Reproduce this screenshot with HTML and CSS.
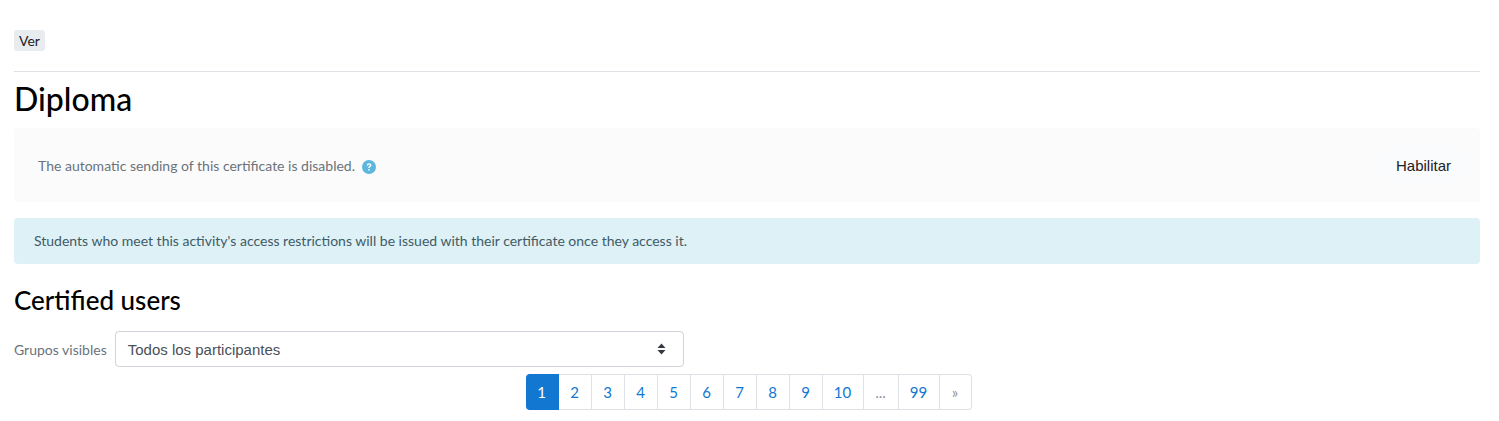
FILE: index.html
```html
<!DOCTYPE html>
<html lang="en">
<head>
    <meta charset="UTF-8">
    <title>Diploma</title>
    <link rel="stylesheet" href="styles.css">
</head>
<body>
    <div class="tags">
        <span class="badge">Ver</span>
    </div>
    <hr class="divider">
    <h2 class="title">Diploma</h2>

    <div class="notice-card">
        <p class="notice-text">
            The automatic sending of this certificate is disabled.
            <svg class="help-icon" width="14" height="14" viewBox="0 0 14 14" aria-hidden="true">
                <circle cx="7" cy="7" r="7" fill="#5bb7dc"/>
                <path d="M4.7 5.4C4.8 4 5.8 3.2 7.1 3.2c1.3 0 2.3.8 2.3 2 0 1-.6 1.4-1.2 1.8-.5.3-.6.5-.6 1.1H6.3c0-1 .2-1.4.9-1.9.5-.3.8-.5.8-1 0-.4-.4-.7-.9-.7-.6 0-.9.3-1 .9H4.700z" fill="#fff"/>
                <rect x="6.300" y="9" width="1.400" height="1.500" fill="#fff"/>
            </svg>
        </p>
        <button class="enable-btn" type="button">Habilitar</button>
    </div>

    <div class="alert-info">Students who meet this activity's access restrictions will be issued with their certificate once they access it.</div>

    <h3 class="subtitle">Certified users</h3>

    <form class="group-form">
        <label class="group-label">Grupos visibles</label>
        <div class="select-box">
            <span>Todos los participantes</span>
            <svg class="select-arrows" width="9" height="12" viewBox="0 0 9 12" aria-hidden="true">
                <path d="M4.500 0.500L8.500 5H0.500z M4.500 11.500L0.500 7H8.500z" fill="#343a40"/>
            </svg>
        </div>
    </form>

    <nav class="pagination">
        <a class="page active" href="#">1</a>
        <a class="page" href="#">2</a>
        <a class="page" href="#">3</a>
        <a class="page" href="#">4</a>
        <a class="page" href="#">5</a>
        <a class="page" href="#">6</a>
        <a class="page" href="#">7</a>
        <a class="page" href="#">8</a>
        <a class="page" href="#">9</a>
        <a class="page wide" href="#">10</a>
        <span class="page dots">...</span>
        <a class="page wide" href="#">99</a>
        <a class="page next" href="#">»</a>
    </nav>
</body>
</html>
```

FILE: styles.css
```css
body {
    margin: 0;
    padding: 30px 19px 0 14px;
    font-family: "Lato", "Noto Sans", sans-serif;
    font-size: 15px;
    color: #343a40;
    background-color: #fff;
}

.tags {
    height: 21px;
}

.badge {
    display: inline-block;
    height: 21px;
    line-height: 21px;
    padding: 0 5px;
    background-color: #e9ecef;
    border-radius: 3px;
    font-size: 14px;
    color: #1d2125;
}

.divider {
    margin: 20px 0 0;
    border: 0;
    border-top: 1px solid #dee2e6;
}

.title {
    margin: 10px 0 12px;
    height: 34px;
    line-height: 34px;
    font-size: 32px;
    font-weight: 500;
    color: #000;
}

.notice-card {
    display: flex;
    align-items: center;
    justify-content: space-between;
    height: 74px;
    padding: 0 16px 0 24px;
    background-color: #fbfbfb;
    border-radius: 4px;
}

.notice-text {
    margin: 0;
    color: #6a737b;
    font-size: 14px;
}

.help-icon {
    margin-left: 3px;
    vertical-align: -3px;
}

.enable-btn {
    height: 36px;
    padding: 0 13px;
    border: 0;
    border-radius: 4px;
    background-color: #fafbfc;
    color: #1d2125;
    font-family: "Liberation Sans", Arial, sans-serif;
    font-size: 15px;
}

.alert-info {
    margin-top: 16px;
    height: 46px;
    line-height: 46px;
    padding: 0 20px;
    background-color: #def1f7;
    border-radius: 4px;
    color: #3f5b65;
    font-size: 14px;
}

.subtitle {
    margin: 20px 0 15px;
    height: 32px;
    line-height: 32px;
    font-size: 26px;
    font-weight: 500;
    color: #000;
}

.group-form {
    display: flex;
    align-items: center;
    gap: 8px;
}

.group-label {
    color: #6a737b;
    font-size: 14px;
}

.select-box {
    display: flex;
    align-items: center;
    justify-content: space-between;
    box-sizing: border-box;
    width: 569px;
    height: 36px;
    padding: 0 17px 0 12px;
    border: 1px solid #ced4da;
    border-radius: 4px;
    font-family: "Liberation Sans", Arial, sans-serif;
    font-size: 15px;
    color: #495057;
}

.pagination {
    display: flex;
    justify-content: center;
    margin: 7px 0 0 3px;
}

.page {
    box-sizing: border-box;
    width: 33px;
    height: 36px;
    line-height: 34px;
    text-align: center;
    border: 1px solid #dee2e6;
    border-left: 0;
    background-color: #fff;
    color: #1177d1;
    font-size: 15px;
    text-decoration: none;
}

.page.active {
    background-color: #1177d1;
    border-color: #1177d1;
    color: #fff;
    border-radius: 4px 0 0 4px;
}

.page.wide {
    width: 41px;
}

.page.dots {
    width: 35px;
    color: #8f959e;
}

.page.next {
    width: 32px;
    color: #8f959e;
    border-radius: 0 4px 4px 0;
}
```
